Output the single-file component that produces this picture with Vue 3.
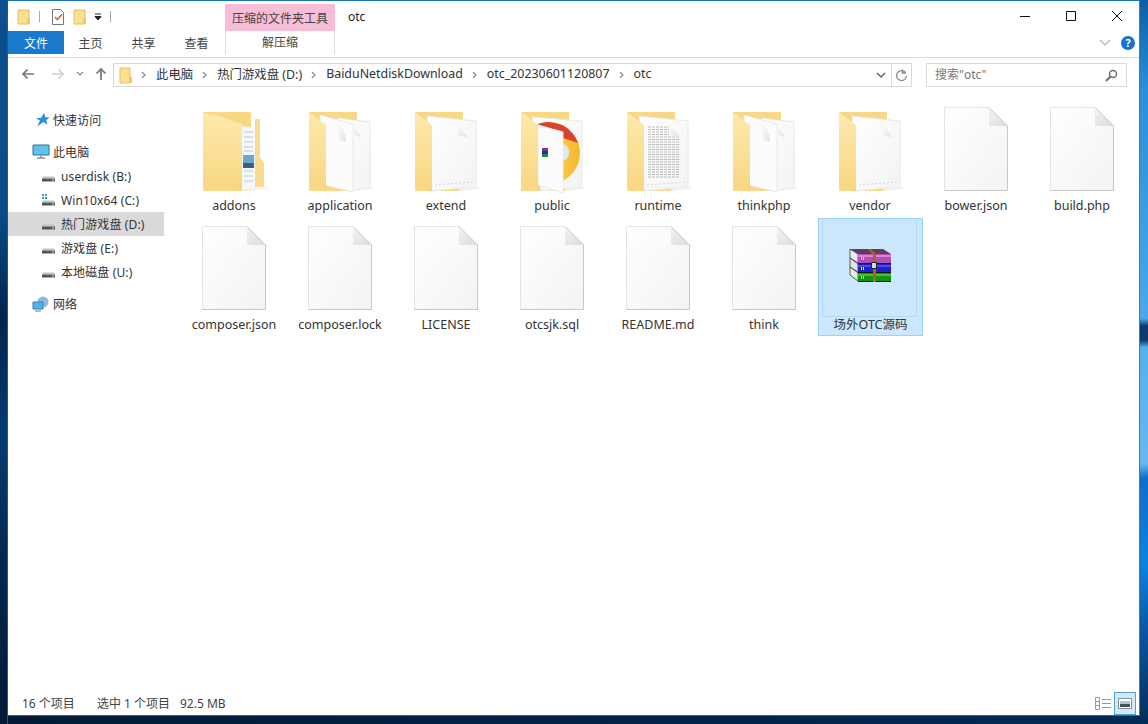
<template>
  <div class="desktop">
    <svg class="defs" width="0" height="0">
      <defs>
        <linearGradient id="flap" x1="0" y1="0" x2="0" y2="1">
          <stop offset="0" stop-color="#fdeaae" />
          <stop offset="1" stop-color="#f8d67f" />
        </linearGradient>
        <linearGradient id="paper" x1="0" y1="0" x2="1" y2="1">
          <stop offset="0" stop-color="#ffffff" />
          <stop offset="1" stop-color="#f3f3f3" />
        </linearGradient>
        <linearGradient id="fold" x1="0" y1="0" x2="1" y2="1">
          <stop offset="0" stop-color="#f2f2f2" />
          <stop offset="1" stop-color="#dcdcdc" />
        </linearGradient>
        <linearGradient id="curl" x1="0" y1="0" x2="1" y2="1">
          <stop offset="0" stop-color="#fbfbfb" />
          <stop offset="1" stop-color="#e4e4e4" />
        </linearGradient>
        <linearGradient id="disc" x1="0" y1="0" x2="1" y2="0">
          <stop offset="0" stop-color="#fbd96e" />
          <stop offset="1" stop-color="#f5b92a" />
        </linearGradient>
      </defs>
    </svg>
    <div class="strip strip-left"></div>
    <div class="column">
      <div class="window">
        <div class="titlebar">
          <div class="qat">
            <svg class="qat-icon" width="16" height="16" viewBox="0 0 16 16"><path d="M2 1h11v14H2z" fill="#fbe08f" stroke="#e6bf62"/><path d="M11 9h3v6h-3z" fill="#f1c862"/></svg>
            <span class="qat-sep"></span>
            <svg class="qat-icon check" width="14" height="16" viewBox="0 0 14 16"><path d="M1.500 .5h8l3 3v12h-11z" fill="#fff" stroke="#777"/><path d="M4 8l2.400 2.600L11 5.500" fill="none" stroke="#d2622a" stroke-width="1.500"/></svg>
            <svg class="qat-icon folder" width="16" height="16" viewBox="0 0 16 16"><path d="M2 1h11v14H2z" fill="#fbe08f" stroke="#e6bf62"/><path d="M11 9h3v6h-3z" fill="#f1c862"/></svg>
            <svg class="qat-drop" width="8" height="8" viewBox="0 0 8 8"><path d="M1 1h6M1 3.500h6L4 7z" fill="#222" stroke="#222" stroke-width="1"/></svg>
            <span class="qat-sep last"></span>
          </div>
          <div class="tools-title">压缩的文件夹工具</div>
          <div class="win-title">otc</div>
          <div class="win-controls">
            <svg width="12" height="12" viewBox="0 0 12 12"><path d="M1 6.500h10" stroke="#111" fill="none"/></svg>
            <svg width="12" height="12" viewBox="0 0 12 12"><path d="M1.500 1.500h9v9h-9z" stroke="#111" fill="none"/></svg>
            <svg width="12" height="12" viewBox="0 0 12 12"><path d="M1 1l10 10M11 1L1 11" stroke="#111" fill="none"/></svg>
          </div>
        </div>

        <div class="tabs">
          <div class="tab-file">文件</div>
          <div class="tab">主页</div>
          <div class="tab">共享</div>
          <div class="tab">查看</div>
          <div class="tab-tools">解压缩</div>
          <div class="tabs-right">
            <svg width="12" height="8" viewBox="0 0 12 8"><path d="M1 1l5 5 5-5" fill="none" stroke="#b5b5b5" stroke-width="1.200"/></svg>
            <div class="help">?</div>
          </div>
        </div>

        <div class="nav">
          <svg class="nav-btn" width="14" height="12" viewBox="0 0 14 12"><path d="M13 6H2M6.500 1.500L2 6l4.500 4.500" fill="none" stroke="#777" stroke-width="1.700"/></svg>
          <svg class="nav-btn forward" width="14" height="12" viewBox="0 0 14 12"><path d="M1 6h11M7.500 1.500L12 6l-4.500 4.500" fill="none" stroke="#cfcfcf" stroke-width="1.700"/></svg>
          <svg class="nav-btn recent" width="8" height="6" viewBox="0 0 8 6"><path d="M1 1l3 3 3-3" fill="none" stroke="#8a8a8a" stroke-width="1.200"/></svg>
          <svg class="nav-btn up" width="12" height="14" viewBox="0 0 12 14"><path d="M6 13V2M1.500 6.500L6 2l4.500 4.500" fill="none" stroke="#777" stroke-width="1.700"/></svg>
          <div class="address">
            <svg class="addr-folder" width="14" height="17" viewBox="0 0 14 17"><path d="M1 1h10v15H1z" fill="#fbe08f" stroke="#e6bf62"/><path d="M10 10h3v6h-3z" fill="#f1c862"/></svg>
            <template v-for="crumb in crumbs" :key="crumb">
              <svg class="crumb-arrow" width="5" height="8" viewBox="0 0 5 8"><path d="M1 1l3 3-3 3" fill="none" stroke="#8a8a8a" stroke-width="1.200"/></svg>
              <span class="crumb">{{ crumb }}</span>
            </template>
            <svg class="addr-drop" width="10" height="7" viewBox="0 0 10 7"><path d="M1 1l4 4 4-4" fill="none" stroke="#666" stroke-width="1.500"/></svg>
            <div class="refresh">
              <svg width="13" height="13" viewBox="0 0 13 13"><path d="M10.500 3.500A5 5 0 1 0 11.500 7M7.500 .5v3.500h3.500" fill="none" stroke="#8a8a8a" stroke-width="1.300"/></svg>
            </div>
          </div>
          <div class="search">
            <span>搜索"otc"</span>
            <svg width="13" height="13" viewBox="0 0 13 13"><circle cx="8" cy="5" r="3.500" fill="none" stroke="#6f6f6f" stroke-width="1.500"/><path d="M5.500 7.500L1 12" stroke="#6f6f6f" stroke-width="2"/></svg>
          </div>
        </div>

        <div class="main">
          <div class="sidebar">
            <div v-for="item in sideItems" :key="item.label" class="side-row" :class="[item.kind, { active: item.active }]">
              <svg v-if="item.kind === 'star'" width="16" height="16" viewBox="0 0 16 16"><path d="M10 1l1.300 4.200 4.200.3-3.300 2.800 1.200 4.500L9.500 10 3 14.500l3-5.700L2 6h5z" fill="#2b8fd8"/></svg>
              <svg v-else-if="item.kind === 'pc'" width="18" height="16" viewBox="0 0 18 16"><path d="M1 1h16v10H1z" fill="#5cc3f0" stroke="#3f6d8f"/><path d="M5 14h8M9 11v3" stroke="#8a949c" stroke-width="1.500"/></svg>
              <svg v-else-if="item.kind === 'net'" width="18" height="16" viewBox="0 0 18 16"><circle cx="11" cy="6" r="5.500" fill="#8fb8dc"/><path d="M1 6h10v7H1z" fill="#4cb4ea" stroke="#3a7fae"/><path d="M3 15h6" stroke="#777"/></svg>
              <svg v-else width="15" height="12" viewBox="0 0 15 12">
                <path v-if="item.win" d="M1 0h2v2H1zM4 0h2v2H4zM1 3h2v2H1zM4 3h2v2H4z" fill="#22a7d8"/>
                <path d="M2 6.500h11l1 2H1z" fill="#c4c4c4"/>
                <path d="M1 8.500h13v3H1z" fill="#555"/>
                <path d="M11 9.500h2v1h-2z" fill="#ddd"/>
              </svg>
              <span>{{ item.label }}</span>
            </div>
          </div>

          <div class="grid">
            <div v-for="file in files" :key="file.name" class="cell" :class="{ selected: file.selected }">
              <div v-if="file.selected" class="cell-inner"></div>
              <svg class="icon" width="104" height="94" viewBox="1 1 104 94">
                <template v-if="file.kind === 'file'">
                  <path d="M21.500 8.500H66L84.500 27V91.500H21.500Z" fill="url(#paper)" stroke="#e4e4e4"/>
                  <path d="M84.500 27V91.500H21.500" fill="none" stroke="#c8c8c8"/>
                  <path d="M66 8.500V27H84.500Z" fill="url(#fold)"/>
                  <path d="M66 8.500L84.500 27" stroke="#cfcfcf" fill="none"/>
                </template>

                <template v-else-if="file.kind === 'rar'">
                  <path d="M33 31L41 36V45L33 40Z" fill="#eceaf0" stroke="#222" stroke-width=".7"/>
                  <path d="M33 40L41 46V54L33 49Z" fill="#e2e2ee" stroke="#222" stroke-width=".7"/>
                  <path d="M33 49L41 55V63L33 57Z" fill="#e6eee2" stroke="#222" stroke-width=".7"/>
                  <path d="M33 31H66L74 36H41Z" fill="#5f3f58"/>
                  <path d="M41 36H74V45H41Z" fill="#b14fb4"/>
                  <path d="M41 37H74V39H41Z" fill="#d884d8"/>
                  <path d="M41 46H74V54H41Z" fill="#2020c4"/>
                  <path d="M41 47H74V49H41Z" fill="#4a4ae8"/>
                  <path d="M41 55H74V63H41Z" fill="#119411"/>
                  <path d="M41 56H74V58H41Z" fill="#3cc43c"/>
                  <path d="M41 45.500H74M41 54.500H74M41 63.500H74" stroke="#111"/>
                  <path d="M44 39h1v3h-1zM46 39h1v3h-1z" fill="#f0d060"/>
                  <path d="M44 49h1v3h-1zM46 49h1v3h-1z" fill="#e4e4e4"/>
                  <path d="M44 58h1v3h-1zM46 58h1v3h-1z" fill="#b8e84a"/>
                  <path d="M51 31H54L59 36V64H56V37Z" fill="#a5651f"/>
                  <path d="M54.500 44.500h5v6h-5z" fill="#d8d8d8" stroke="#222"/>
                </template>

                <template v-else>
                  <path d="M22 13H70V92H22Z" fill="#f8d885"/>

                  <template v-if="file.kind === 'addons'">
                    <path d="M74 20H79V58L83 64V88H74Z" fill="#f9dc8e"/>
                    <path d="M61 27L74 29V89L61 92Z" fill="#f5f7f9"/>
                    <path d="M63 33h9M63 38h9M63 43h9M63 48h9M63 52h9M63 72h9M63 77h9M63 82h9" stroke="#b7cad8"/>
                    <path d="M62 56h11v13H62z" fill="#6ba6d0"/>
                    <path d="M62 64h11v5H62z" fill="#3d5f7a"/>
                    <path d="M31 15L61 25V92L31 80Z" fill="url(#flap)"/>
                  </template>

                  <template v-else-if="file.kind === 'public'">
                    <path d="M33 18L83 22V88L42 92Z" fill="url(#paper)" stroke="#eaeaea"/>
                    <path d="M39 25A31 31 0 1 1 39 83Z" fill="url(#disc)"/>
                    <path d="M39 25A31 31 0 0 1 79 44L64 39H39Z" fill="#d9432f"/>
                    <path d="M64 45A9 9 0 0 1 64 62Z" fill="#dfe8ee"/>
                    <path d="M39 26L64 33V94L39 86Z" fill="#fbfbfb" stroke="#ececec"/>
                    <path d="M43 49h6v3h-6z" fill="#7a3a8a"/>
                    <path d="M43 52h6v3h-6z" fill="#2230a8"/>
                    <path d="M43 55h6v3h-6z" fill="#1e8a2a"/>
                  </template>

                  <template v-else-if="file.kind === 'two'">
                    <path d="M50 19L83 23V89L66 92L50 88Z" fill="url(#paper)" stroke="#e6e6e6"/>
                    <path d="M33 16L66 25V93L33 85Z" fill="#fcfcfc" stroke="#e8e8e8"/>
                    <path d="M51 24L59 36V43L52 41Z" fill="url(#curl)"/>
                    <path d="M66 25L73 36V38L66 36Z" fill="url(#curl)"/>
                  </template>

                  <template v-else>
                    <path :d="file.kind === 'narrow' ? 'M35 17L83 22V88L39 92Z' : 'M34 17L83 22V88L39 92Z'" fill="url(#paper)" stroke="#e8e8e8"/>
                    <path d="M42 86L80 83" stroke="#d8d8d8" stroke-dasharray="2 2"/>
                    <path v-if="file.kind === 'text'" :d="textLines" stroke="#a8a8a8" stroke-dasharray="3 1" fill="none" stroke-width=".8"/>
                    <path :d="file.kind === 'narrow' ? 'M67 26L75 38L66 37Z' : 'M64 25L75 38L65 37Z'" fill="url(#curl)"/>
                  </template>

                  <path v-if="file.kind === 'addons'" d="M22 13L40 21V92L22 79Z" fill="url(#flap)"/>
                  <path v-else d="M22 13L39 26V93L22 79Z" fill="url(#flap)"/>
                  <path d="M66 91l20-2" stroke="#f1f1f1" stroke-width="2"/>
                </template>
              </svg>
              <div class="label">{{ file.name }}</div>
            </div>
          </div>
        </div>

        <div class="status">
          <span class="count">16 个项目</span>
          <span class="sel">选中 1 个项目</span>
          <span>92.5 MB</span>
          <div class="views">
            <svg class="view-list" width="16" height="13" viewBox="0 0 16 13"><path d="M.5.5h4v12h-4zM.5 4.500h4M.5 8.500h4M7 2.500h9M7 6.500h9M7 10.500h9" fill="none" stroke="#9a9a9a"/></svg>
            <div class="view-large">
              <svg width="14" height="11" viewBox="0 0 14 11"><path d="M.5.5h13v10H.5z" fill="#fff" stroke="#8a8a8a"/><path d="M2 3h10v3H2z" fill="#a9c8de"/><path d="M2 6h10v3H2z" fill="#44525e"/></svg>
            </div>
          </div>
        </div>
      </div>
      <div class="strip-bottom"></div>
    </div>
    <div class="strip strip-right"></div>
  </div>
</template>

<script setup>
const crumbs = ['此电脑', '热门游戏盘 (D:)', 'BaiduNetdiskDownload', 'otc_20230601120807', 'otc']

const sideItems = [
  { label: '快速访问', kind: 'star' },
  { label: '此电脑', kind: 'pc' },
  { label: 'userdisk (B:)', kind: 'drive' },
  { label: 'Win10x64 (C:)', kind: 'drive', win: true },
  { label: '热门游戏盘 (D:)', kind: 'drive', active: true },
  { label: '游戏盘 (E:)', kind: 'drive' },
  { label: '本地磁盘 (U:)', kind: 'drive' },
  { label: '网络', kind: 'net' }
]

const files = [
  { name: 'addons', kind: 'addons' },
  { name: 'application', kind: 'two' },
  { name: 'extend', kind: 'one' },
  { name: 'public', kind: 'public' },
  { name: 'runtime', kind: 'text' },
  { name: 'thinkphp', kind: 'two' },
  { name: 'vendor', kind: 'narrow' },
  { name: 'bower.json', kind: 'file' },
  { name: 'build.php', kind: 'file' },
  { name: 'composer.json', kind: 'file' },
  { name: 'composer.lock', kind: 'file' },
  { name: 'LICENSE', kind: 'file' },
  { name: 'otcsjk.sql', kind: 'file' },
  { name: 'README.md', kind: 'file' },
  { name: 'think', kind: 'file' },
  { name: '场外OTC源码', kind: 'rar', selected: true }
]

// little text lines on the page inside the runtime folder
let textLines = ''
for (let y = 28; y < 80; y += 2.5) {
  textLines += `M43 ${y}H${y < 38 ? 64 : 75}`
}
</script>

<style>
html, body {
  margin: 0;
  background: #02213f;
}
</style>

<style scoped>
.desktop {
  display: flex;
  width: 1148px;
  height: 724px;
  overflow: hidden;
  font-family: "Noto Sans", "Noto Sans CJK SC", sans-serif;
  font-size: 12px;
  color: #333;
}

.defs {
  display: block;
  flex: none;
}

.strip {
  width: 8px;
  flex: none;
}

.strip-left {
  width: 7px;
  background: linear-gradient(180deg, #0d4f8f 0%, #0a4a86 30%, #02254d 44%, #063a72 60%, #03284f 78%, #021a36 100%);
  border-right: 1px solid #0e5da5;
}

.strip-right {
  background: linear-gradient(180deg, #0a5ea6 0%, #2a8fd8 12%, #4aa8ea 44%, #0a3c70 45%, #0a3c70 47%, #55b0ee 48%, #66b8f0 64%, #0f6fc8 66%, #0d82e0 78%, #0a5cab 86%, #032c58 100%);
}

.column {
  flex: 1;
  display: flex;
  flex-direction: column;
  min-width: 0;
}

.window {
  height: 716px;
  box-sizing: border-box;
  display: flex;
  flex-direction: column;
  background: #fff;
  border-top: 1px solid #1a73b8;
  border-right: 1px solid #2b83c4;
  border-bottom: 1px solid #1a6fb0;
}

.strip-bottom {
  flex: 1;
  background: linear-gradient(90deg, #021a36, #032a55);
}

.titlebar {
  height: 30px;
  flex: none;
  display: flex;
}

.qat {
  width: 217px;
  flex: none;
  display: flex;
  align-items: center;
  padding-left: 8px;
  padding-top: 1px;
  box-sizing: border-box;
}

.qat-icon {
  flex: none;
}

.qat-sep {
  width: 1px;
  height: 11px;
  background: #a8a8a8;
  margin: 0 11px 0 7px;
}

.qat-sep.last {
  margin: 0 0 0 8px;
}

.folder {
  margin-left: 7px;
}

.qat-drop {
  margin-left: 6px;
}

.tools-title {
  width: 110px;
  height: 27px;
  margin-top: 3px;
  background: #f8bdd7;
  display: flex;
  align-items: center;
  justify-content: center;
  font-size: 12px;
  color: #444;
  flex: none;
}

.win-title {
  margin-left: 13px;
  padding-top: 7px;
  color: #222;
}

.win-controls {
  margin-left: auto;
  display: flex;
  gap: 34px;
  padding: 9px 16px 0 0;
}

.tabs {
  height: 23px;
  flex: none;
  display: flex;
  align-items: center;
}

.tab-file {
  width: 56px;
  height: 23px;
  background: #1979ca;
  color: #fff;
  display: flex;
  align-items: center;
  justify-content: center;
}

.tab {
  width: 53px;
  text-align: center;
  color: #444;
}

.tab-tools {
  width: 108px;
  height: 23px;
  margin-left: 2px;
  text-align: center;
  line-height: 23px;
  border-left: 1px solid #dcdcdc;
  border-right: 1px solid #dcdcdc;
  color: #444;
}

.tabs-right {
  margin-left: auto;
  display: flex;
  align-items: center;
  gap: 10px;
  padding-right: 4px;
}

.help {
  width: 14px;
  height: 14px;
  border-radius: 50%;
  background: #1673c5;
  color: #fff;
  font-weight: 700;
  font-size: 11px;
  line-height: 14px;
  text-align: center;
}

.nav {
  height: 36px;
  flex: none;
  box-sizing: border-box;
  margin-top: 3px;
  border-top: 1px solid #dadada;
  padding-top: 5px;
  display: flex;
  align-items: flex-start;
}

.nav-btn {
  flex: none;
  margin-top: 5px;
}

.nav-btn:first-child {
  margin-left: 13px;
}

.forward {
  margin-left: 16px;
}

.recent {
  margin-left: 11px;
  margin-top: 8px;
}

.up {
  margin-left: 11px;
  margin-top: 4px;
}

.address {
  width: 799px;
  height: 24px;
  margin-left: 6px;
  box-sizing: border-box;
  border: 1px solid #d9d9d9;
  display: flex;
  align-items: center;
  padding-left: 5px;
  color: #333;
}

.addr-folder {
  margin-right: -1px;
}

.crumb-arrow {
  margin: 0 10px 0 9px;
  flex: none;
}

.crumb {
  white-space: nowrap;
  font-size: 12.400px;
  margin-bottom: 3px;
}

.addr-drop {
  margin-left: auto;
  margin-right: 5px;
}

.refresh {
  width: 19px;
  height: 22px;
  border-left: 1px solid #d9d9d9;
  display: flex;
  align-items: center;
  justify-content: center;
}

.search {
  width: 201px;
  height: 24px;
  margin-left: 14px;
  box-sizing: border-box;
  border: 1px solid #d9d9d9;
  display: flex;
  align-items: center;
  justify-content: space-between;
  padding: 0 8px;
  color: #777;
}

.search span {
  margin-bottom: 2px;
}

.main {
  flex: 1;
  display: flex;
  min-height: 0;
}

.sidebar {
  width: 156px;
  flex: none;
  padding-top: 15px;
}

.side-row {
  height: 24px;
  display: flex;
  align-items: center;
  white-space: nowrap;
  padding-left: 33px;
  letter-spacing: .12px;
}

.side-row svg {
  flex: none;
  margin-right: 5px;
}

.side-row.star,
.side-row.pc,
.side-row.net {
  padding-left: 24px;
}

.side-row.star svg {
  margin-left: 2px;
  margin-right: 3px;
}

.side-row.pc svg,
.side-row.net svg {
  margin-right: 3px;
}

.side-row.pc,
.side-row.net {
  margin-top: 8px;
}

.side-row.active {
  background: #d9d9d9;
}

.grid {
  display: grid;
  grid-template-columns: repeat(9, 106px);
  grid-auto-rows: 119px;
  margin-left: 17px;
  margin-top: 7px;
  align-content: start;
}

.cell {
  position: relative;
  height: 118px;
  box-sizing: border-box;
  text-align: center;
}

.cell.selected {
  margin-left: 1px;
  margin-top: -1px;
  width: 105px;
  background: #cce8ff;
  border: 1px solid #99d1ff;
}

.cell-inner {
  position: absolute;
  left: 3px;
  right: 5px;
  top: 1px;
  height: 95px;
  border: 1px solid #b8d6f0;
  border-top-color: #c2def5;
}

.icon {
  display: block;
  margin: 0 auto;
  position: relative;
}

.cell.selected .icon {
  margin-left: -1px;
}

.label {
  font-size: 12.500px;
  line-height: 14px;
  white-space: nowrap;
  margin-top: 5px;
}

.status {
  height: 24px;
  flex: none;
  display: flex;
  align-items: center;
  padding-left: 14px;
  color: #444;
}

.count {
  width: 75px;
}

.sel {
  width: 83px;
}

.views {
  margin-left: auto;
  height: 100%;
  display: flex;
  align-items: center;
  padding-right: 3px;
}

.view-list {
  margin-right: 3px;
}

.view-large {
  width: 22px;
  height: 23px;
  box-sizing: border-box;
  border: 1px solid #52a5c8;
  background: #cfeaff;
  display: flex;
  align-items: center;
  justify-content: center;
}
</style>
